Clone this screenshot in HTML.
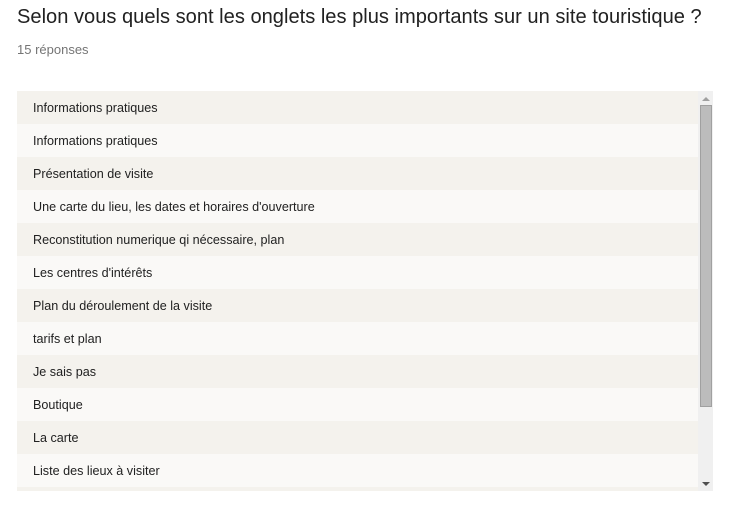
<!DOCTYPE html><html><head><style>
body{margin:0;width:733px;height:509px;background:#fff;font-family:"Liberation Sans",sans-serif;position:relative;overflow:hidden}
h1{position:absolute;left:17px;top:6px;margin:0;font-size:20.1px;font-weight:normal;color:#212121;white-space:nowrap}
.sub{position:absolute;left:17px;top:42px;font-size:13px;color:#757575}
.list{position:absolute;left:17px;top:91px;width:681px;height:400px;overflow:hidden}
.r{height:33px;line-height:34px;padding-left:16px;font-size:12.6px;color:#212121}
.r:nth-child(odd){background:#f4f2ed}.r:nth-child(even){background:#faf9f7}
.sb{position:absolute;left:698px;top:91px;width:15px;height:400px;background:#f0f0f0}
.th{position:absolute;left:700px;top:105px;width:10px;height:300px;background:#bcbcbc;border:1px solid #a0a0a0}
.up{position:absolute;left:702px;top:97px;width:0;height:0;border-left:4px solid transparent;border-right:4px solid transparent;border-bottom:4px solid #a0a0a0}
.dn{position:absolute;left:702px;top:482px;width:0;height:0;border-left:4px solid transparent;border-right:4px solid transparent;border-top:4px solid #505050}
</style></head><body>
<h1>Selon vous quels sont les onglets les plus importants sur un site touristique ?</h1>
<div class="sub">15 réponses</div>
<div class="list">
<div class="r">Informations pratiques</div>
<div class="r">Informations pratiques</div>
<div class="r">Présentation de visite</div>
<div class="r">Une carte du lieu, les dates et horaires d'ouverture</div>
<div class="r">Reconstitution numerique qi nécessaire, plan</div>
<div class="r">Les centres d'intérêts</div>
<div class="r">Plan du déroulement de la visite</div>
<div class="r">tarifs et plan</div>
<div class="r">Je sais pas</div>
<div class="r">Boutique</div>
<div class="r">La carte</div>
<div class="r">Liste des lieux à visiter</div>
<div class="r"></div>
</div>
<div class="sb"></div><div class="th"></div><div class="up"></div><div class="dn"></div>
</body></html>
